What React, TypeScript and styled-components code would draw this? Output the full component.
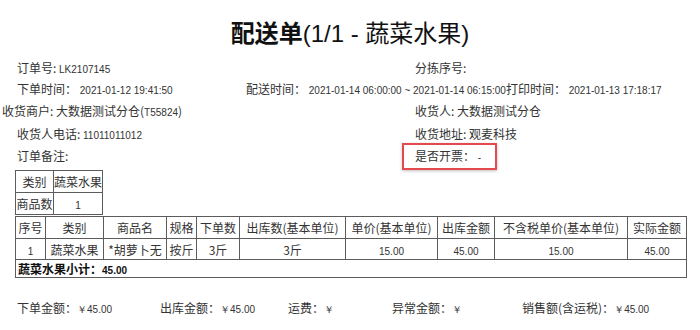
import React from "react";
import styled, { createGlobalStyle } from "styled-components";

const GlobalStyle = createGlobalStyle`
  body {
    margin: 0;
    background: #fff;
    color: #333;
    font-family: "Noto Sans CJK SC", sans-serif;
    font-size: 12px;
  }
`;

const Sheet = styled.div`
  width: 700px;
  height: 330px;
  overflow: hidden;
`;

const Title = styled.h1`
  margin: 0;
  padding-top: 16px;
  height: 57px;
  box-sizing: border-box;
  font-family: "Liberation Sans", "Noto Sans CJK SC", sans-serif;
  font-size: 24px;
  font-weight: 400;
  line-height: 36px;
  color: #111;
  text-align: center;

  b {
    font-weight: 700;
  }
`;

// latin values print narrower than the labels
const Num = styled.span`
  font-family: "Liberation Sans", sans-serif;
  font-size: 10px;
`;

const InfoRow = styled.div<{ $indent?: number; $split: number; $h?: number }>`
  display: grid;
  grid-template-columns: ${(p) => p.$split}px 1fr;
  align-items: center;
  height: ${(p) => p.$h ?? 22}px;
  padding-left: ${(p) => p.$indent ?? 17}px;
  white-space: nowrap;
`;

const Field = styled.span`
  position: relative;
`;

const Flagged = styled(Field)`
  &::after {
    content: "";
    position: absolute;
    left: -13px;
    top: -4px;
    width: 95px;
    height: 27px;
    box-sizing: border-box;
    border: 2px solid #e5484d;
    box-shadow: 0 1px 3px rgba(0, 0, 0, 0.25);
  }
`;

const Grid = styled.table<{ $top: number }>`
  border-collapse: collapse;
  table-layout: fixed;
  margin-left: 15px;
  margin-top: ${(p) => p.$top}px;

  td {
    border: 1px solid #5c5c5c;
    padding: 0;
    text-align: center;
    white-space: nowrap;
    overflow: hidden;
  }
`;

const Row = styled.tr<{ $h: number }>`
  height: ${(p) => p.$h}px;
`;

const Subtotal = styled.td`
  && {
    text-align: left;
    padding-left: 2px;
    font-weight: 700;
    color: #111;
  }
`;

const Totals = styled.div`
  display: grid;
  grid-template-columns: 143px 128px 104px 130px 1fr;
  align-items: center;
  height: 20px;
  margin-top: 20px;
  padding-left: 17px;
  white-space: nowrap;
`;

const summaryCols = [38, 49];
const lineCols = [30, 58, 63, 30, 43, 106, 92, 57, 133, 59];
const heads = [
  "序号",
  "类别",
  "商品名",
  "规格",
  "下单数",
  "出库数(基本单位)",
  "单价(基本单位)",
  "出库金额",
  "不含税单价(基本单位)",
  "实际金额",
];
const line = ["1", "蔬菜水果", "*胡萝卜无", "按斤", "3斤", "3斤", "15.00", "45.00", "15.00", "45.00"];
const isNum = (s: string) => /^[\d.]+$/.test(s);

export default function App() {
  return (
    <Sheet>
      <GlobalStyle />
      <Title>
        <b>配送单</b>(1/1 - 蔬菜水果)
      </Title>

      <InfoRow $split={398} $h={20}>
        <Field>
          订单号: <Num>LK2107145</Num>
        </Field>
        <Field>分拣序号:</Field>
      </InfoRow>
      <InfoRow $split={229}>
        <Field>
          下单时间：<Num> 2021-01-12 19:41:50</Num>
        </Field>
        <Field>
          配送时间：<Num> 2021-01-14 06:00:00 ~ 2021-01-14 06:15:00</Num>打印时间：
          <Num> 2021-01-13 17:18:17</Num>
        </Field>
      </InfoRow>
      <InfoRow $split={413} $indent={2} $h={23}>
        <Field>
          收货商户: 大数据测试分仓(<Num>T55824</Num>)
        </Field>
        <Field>收货人: 大数据测试分仓</Field>
      </InfoRow>
      <InfoRow $split={398}>
        <Field>
          收货人电话: <Num>11011011012</Num>
        </Field>
        <Field>收货地址: 观麦科技</Field>
      </InfoRow>
      <InfoRow $split={398}>
        <Field>订单备注:</Field>
        <Flagged>
          是否开票：<Num> -</Num>
        </Flagged>
      </InfoRow>

      <Grid $top={4}>
        <colgroup>
          {summaryCols.map((w, i) => (
            <col key={i} style={{ width: w }} />
          ))}
        </colgroup>
        <tbody>
          <Row $h={22}>
            <td>类别</td>
            <td>蔬菜水果</td>
          </Row>
          <Row $h={22}>
            <td>商品数</td>
            <td>
              <Num>1</Num>
            </td>
          </Row>
        </tbody>
      </Grid>

      <Grid $top={1}>
        <colgroup>
          {lineCols.map((w, i) => (
            <col key={i} style={{ width: w }} />
          ))}
        </colgroup>
        <tbody>
          <Row $h={22}>
            {heads.map((h) => (
              <td key={h}>{h}</td>
            ))}
          </Row>
          <Row $h={21}>
            {line.map((c, i) => (
              <td key={i}>{isNum(c) ? <Num>{c}</Num> : c}</td>
            ))}
          </Row>
          <Row $h={18}>
            <Subtotal colSpan={10}>
              蔬菜水果小计：<Num>45.00</Num>
            </Subtotal>
          </Row>
        </tbody>
      </Grid>

      <Totals>
        <span>
          下单金额：<Num>￥45.00</Num>
        </span>
        <span>
          出库金额：<Num>￥45.00</Num>
        </span>
        <span>
          运费：<Num>￥</Num>
        </span>
        <span>
          异常金额：<Num>￥</Num>
        </span>
        <span>
          销售额(含运税)：<Num>￥45.00</Num>
        </span>
      </Totals>
    </Sheet>
  );
}
